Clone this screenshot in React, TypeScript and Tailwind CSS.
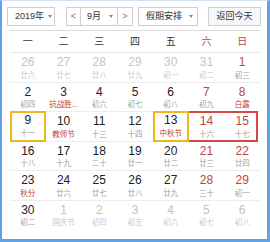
import React from 'react';

type Day = {
  n: number;
  l: string;
  muted?: boolean;
  redNum?: boolean;
  redLunar?: boolean;
  today?: boolean;
};

const weekdays = ['一', '二', '三', '四', '五', '六', '日'];

const rows: Day[][] = [
  [
    { n: 26, l: '廿六', muted: true },
    { n: 27, l: '廿七', muted: true },
    { n: 28, l: '廿八', muted: true },
    { n: 29, l: '廿九', muted: true },
    { n: 30, l: '初一', muted: true },
    { n: 31, l: '初二', muted: true },
    { n: 1, l: '初三', redNum: true },
  ],
  [
    { n: 2, l: '初四' },
    { n: 3, l: '抗战胜...', redLunar: true },
    { n: 4, l: '初六' },
    { n: 5, l: '初七' },
    { n: 6, l: '初八' },
    { n: 7, l: '初九', redNum: true },
    { n: 8, l: '白露', redNum: true, redLunar: true },
  ],
  [
    { n: 9, l: '十一', today: true },
    { n: 10, l: '教师节', redLunar: true },
    { n: 11, l: '十三' },
    { n: 12, l: '十四' },
    { n: 13, l: '中秋节', redLunar: true, today: true },
    { n: 14, l: '十六', redNum: true },
    { n: 15, l: '十七', redNum: true },
  ],
  [
    { n: 16, l: '十八' },
    { n: 17, l: '十九' },
    { n: 18, l: '二十' },
    { n: 19, l: '廿一' },
    { n: 20, l: '廿二' },
    { n: 21, l: '廿三', redNum: true },
    { n: 22, l: '廿四', redNum: true },
  ],
  [
    { n: 23, l: '秋分', redLunar: true },
    { n: 24, l: '廿六' },
    { n: 25, l: '廿七' },
    { n: 26, l: '廿八' },
    { n: 27, l: '廿九' },
    { n: 28, l: '三十', redNum: true },
    { n: 29, l: '初一', redNum: true },
  ],
  [
    { n: 30, l: '初二' },
    { n: 1, l: '国庆节', muted: true },
    { n: 2, l: '初四', muted: true },
    { n: 3, l: '初五', muted: true },
    { n: 4, l: '初六', muted: true },
    { n: 5, l: '初七', muted: true },
    { n: 6, l: '初八', muted: true },
  ],
];

function Caret() {
  return <span className="w-0 h-0 border-l-[2.5px] border-r-[2.5px] border-t-[3px] border-l-transparent border-r-transparent border-t-[#888]" />;
}

export default function App() {
  return (
    <div
      className="w-[270px] h-[242px] bg-white border-l-2 border-r-[3px] border-b-[3px] border-t border-[#5fa3e6] border-t-[#d4e3f4] overflow-hidden"
      style={{ fontFamily: '"Liberation Sans", "Noto Sans CJK SC", sans-serif' }}
    >
      {/* 顶部选择栏 */}
      <div className="flex items-center pt-[6px] pl-[5px] h-[25px] text-[9px] text-[#333]">
        <div className="w-[48px] h-[19px] border border-[#cfcfcf] flex items-center justify-between pl-[7px] pr-[2px]">
          <span>2019年</span>
          <Caret />
        </div>
        <div className="ml-[11px] flex h-[19px] border border-[#cfcfcf]">
          <div className="w-[14px] flex items-center justify-center border-r border-[#cfcfcf] text-[#777]">&lt;</div>
          <div className="w-[37px] flex items-center justify-between pl-[6px] pr-[4px] border-r border-[#cfcfcf]">
            <span>9月</span>
            <Caret />
          </div>
          <div className="w-[14px] flex items-center justify-center text-[#777]">&gt;</div>
        </div>
        <div className="ml-[5px] w-[60px] h-[19px] border border-[#cfcfcf] flex items-center justify-between pl-[7px] pr-[4px]">
          <span>假期安排</span>
          <Caret />
        </div>
        <div className="ml-[10px] w-[53px] h-[19px] border border-[#cfcfcf] bg-[#f7f7f7] flex items-center justify-center">
          返回今天
        </div>
      </div>

      <div className="mx-[8px] w-[250px] mt-[4px] border-t border-[#dcdcdc]">
        {/* 星期 */}
        <div className="grid grid-cols-7 h-[22px] items-center border-b border-[#e6e6e6] text-[10px]">
          {weekdays.map((w, i) => (
            <div key={w} className={`text-center ${i >= 5 ? 'text-[#b9474a]' : 'text-[#333]'}`}>{w}</div>
          ))}
        </div>

        {rows.map((row, ri) => (
          <div key={ri} className={`relative grid grid-cols-7 h-[29.5px] ${ri < 5 ? 'border-b border-[#ececec]' : ''}`}>
            {row.map((d, di) => (
              <div
                key={di}
                className={`relative flex flex-col items-center pt-[2px] ${d.today ? 'border-2 border-[#f2b61c] z-10 -mt-px h-[31px]' : ''}`}
              >
                <span
                  className={`text-[12px] leading-[14px] ${d.muted ? 'text-[#c4c4c4]' : d.redNum ? 'text-[#b9474a]' : 'text-[#222]'} ${d.today ? '-mt-[2px]' : ''}`}
                >
                  {d.n}
                </span>
                <span
                  className={`text-[7.5px] leading-[9px] mt-[1.5px] whitespace-nowrap ${d.muted ? 'text-[#c8c8c8]' : d.redLunar ? 'text-[#c0393b]' : 'text-[#a0a0a0]'}`}
                >
                  {d.l}
                </span>
              </div>
            ))}
            {ri === 2 && (
              <div className="absolute left-[143px] right-[2px] -top-px h-[31px] border-2 border-[#d24a43] pointer-events-none" />
            )}
          </div>
        ))}
      </div>
    </div>
  );
}
